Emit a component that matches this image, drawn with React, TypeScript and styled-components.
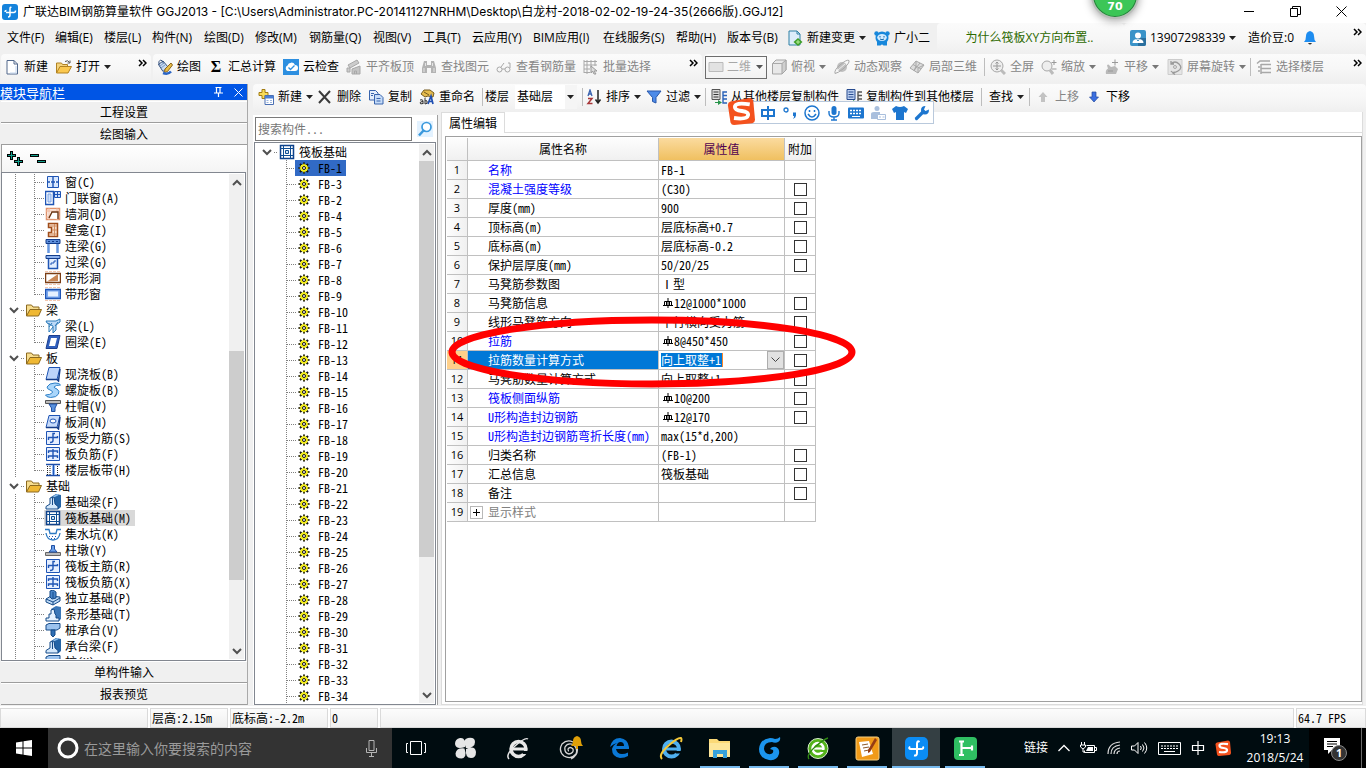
import React from 'react';
import styled, { createGlobalStyle, css } from 'styled-components';

const ui = `"Open Sans", "Noto Sans CJK SC", sans-serif`;
const song = `"Noto Sans Mono CJK SC", "Noto Sans CJK SC", monospace`;

const GlobalStyle = createGlobalStyle`
  * { box-sizing: border-box; }
  html, body { margin: 0; padding: 0; }
  body { font: 12px/16px ${ui}; color: #000; background: #f0f0f0; overflow: hidden; }
  button, input, select { font: inherit; color: inherit; margin: 0; padding: 0; border: 0; border-radius: 0; background: none; outline: none; }
  a { text-decoration: none; }
  ul { list-style: none; margin: 0; padding: 0; }
  svg { display: block; flex: none; }
`;

/* ---------- icons ---------- */

const B = '#1f55b5';
const G = '#a8a8a8';
const f = (fill: string) => ({ fill, stroke: 'none' });

const icons: Record<string, React.ReactNode> = {
  app: <><rect width="16" height="16" rx="3" {...f('#1583dc')} /><path d="M9.500 3.500Q8 2.500 8 5v6q0 2-2 2M3 8q0-1.500 1.500-1.500M4 8.500h8q1.500 0 1.500-2" stroke="#fff" strokeWidth="1.500" /></>,
  page: <><path d="M3 1.500h7l3.500 3.500v10H3z" fill="#fff" stroke="#53698c" /><path d="M10 1.500V5h3.500" stroke="#53698c" /><path d="M12 7v7H6" stroke="#c4d6ee" /></>,
  open: <><path d="M.5 14V4h5l1 1.500h5V8" fill="#f4d37d" stroke="#b18222" /><path d="M.5 14 4 7.500h11.500L12 14z" fill="#fbc84f" stroke="#b18222" /><path d="M9 2.500q3-2 4.500 1M14 1.500v2.500h-2.500" stroke="#555" /></>,
  draw: <><path d="M1.500 5.500 6 2l5 6-5 4.500z" fill="#c9dbf2" stroke="#36527f" /><path d="M2 6q-1-4 1.500-5Q6 1 6.500 5" stroke="#36527f" /><path d="M3 7l4-3M4 9l4-3" stroke="#7c9cc8" /><path d="M8 10l6-6 1.500 2-5 6.500-3 1z" fill="#e9bd45" stroke="#8a641c" /><path d="M6 14q5 2 8-1.500" stroke="#2b65c5" strokeWidth="2.500" /></>,
  cloud: <><rect width="16" height="16" {...f('#2d8fe0')} /><path d="M4.500 12a3 3 0 0 1 0-5.500 4 4 0 0 1 7.500-.5 3 3 0 0 1 0 6z" {...f('#fff')} /><path d="M5.500 8.500l2 2 4-4" stroke="#2d8fe0" strokeWidth="1.300" /></>,
  align: <><path d="M2 6l9-5 2 3-9 5zM1 9l3 0v4l-3 0z" fill="#ccc" stroke={G} /><path d="M6 15V10l8-3v8zM8.500 15v-3h2v3" fill="#c4c4c4" stroke={G} /></>,
  find: <><path d="M3 2h3v4h4V2h3l2 7v5h-5V9H6v5H1V9z" {...f('#b3b3b3')} /><path d="M3 9v4M13 9v4M4.500 4v3M11.500 4v3" stroke="#e5e5e5" /></>,
  glasses: <><circle cx="3.500" cy="10.500" r="2.500" /><circle cx="11.500" cy="10.500" r="2.500" /><path d="M6 10h3M5 8l3-4M14 9V4h-2" /></>,
  batch: <><path d="M1 1v13M4 1v14M8 1v8M12 1v6M1 2.500h13M1 6h13M1 10h6M1 13.500h6" /><path d="M8 7l6 5h-3l2 3-2 0-1.500-3L8 14z" fill="#ddd" stroke="#999" /></>,
  plane: <path d="M1 3.500h14v9H1z" fill="#e2e2e2" stroke="#bbb" />,
  cube: <><path d="M1.500 4.500 5 1h10v10l-4 4h-9.500z" fill="#e8e8e8" stroke="#a5a5a5" /><path d="M11 4.500 15 1v10l-4 4z" fill="#cfcfcf" stroke="#a5a5a5" /><path d="M1.500 4.500H11" stroke="#aaa" /></>,
  orbit: <><circle cx="8" cy="8" r="5" {...f('#bfbfbf')} /><path d="M1 14.500Q0 11 6 6q7-6 9-4.500Q16 4 9 10q-5 4-8 4.500z" stroke={G} /><path d="M4 11l7-6" stroke="#eee" /></>,
  part3d: <><path d="M1 9 7 2l8 4-6 8z" fill="#ddd" stroke={G} /><path d="M4 5.500l8 4.500M11 4l-6 7.500M7 2v5l-2 5M9 14V9l6-3" stroke={G} /></>,
  full: <><circle cx="7" cy="7" r="6" fill="#eee" stroke={G} /><path d="M7 3v8M3 7h8M5.500 4.500 7 3l1.500 1.500M5.500 9.500 7 11l1.500-1.500" stroke="#999" /><path d="M11 11l4 4" stroke="#bbb" strokeWidth="3" /></>,
  zoom: <><circle cx="6" cy="7" r="5" fill="#eee" stroke={G} /><path d="M9 11l3 4" stroke="#bbb" strokeWidth="3" /><path d="M13 1v5M10.500 3.500h5M11 10h4.500" stroke="#999" /></>,
  pan: <><path d="M2 15q-1-4 2-5.500L3 6.500q1-2 2.500 0L7 8l4-1 3 3-2 5z" {...f('#b9b9b9')} /><path d="M11 .5v6M8 3.500h6M4 12h5" stroke="#999" /></>,
  rotate: <><path d="M1 .5h14v15H1z" fill="#e5e5e5" stroke="#ccc" /><path d="M4 5q4-4 8 0t-1 7-7 0M4 2v3h3M8 13l-2 1 2 1.500" stroke="#999" strokeWidth="1.300" /><circle cx="8" cy="8" r="1.500" stroke={G} /></>,
  floorSel: <path d="M1 4.500 4 2h10M5 5.500h10M5 9.500h10M5 13.500h10M5 5v10M2 8h2M2 12h2" strokeWidth="1.500" />,
  newItem: <><path d="M4 .5h3v3h3v3H7v3H4v-3H1v-3h3z" fill="#f9dc59" stroke="#a37c12" /><path d="M7 6.500h8.500v9H7z" fill="#fff" stroke="#4a6fb3" /><path d="M7 7h8.500v2.500H7z" {...f('#4c7fd4')} /><path d="M8.500 11.500h2M12 11.500h2M8.500 13.500h2M12 13.500h2" stroke="#9ab4dd" /></>,
  del: <path d="M2 2l11 12M13 2 2 14" stroke="#3a3a3a" strokeWidth="2" />,
  copy: <><path d="M1.500 1.500h6l2.500 2.500v7H1.500z" fill="#e4eefc" stroke="#3864ad" /><path d="M6.500 5.500h5.500l3 3V15H6.500z" fill="#c5dbf8" stroke="#3864ad" /><path d="M3 4.500h3M3 6.500h2M8.500 9.500h4M8.500 12h4" stroke="#3864ad" /></>,
  rename: <><path d="M2 5l3-4h6l4 3-1 4-5-1-3 1z" fill="#e5bb4c" stroke="#745a20" /><path d="M5 3l5 3" stroke="#745a20" /><path d="M9 15l3-8 2 8M10 12.500h3.500" stroke="#1f4fb2" strokeWidth="1.700" /><path d="M1 11q3-1 3 1v3M4 12.500q-3 0-3 1.500t3 .5M6 9v6q3 0 2-3-1-1-2 0" stroke="#333" /></>,
  sort: <><path d="M2 7 4 1l2 6M2.500 5h3" stroke="#3861ae" strokeWidth="1.300" /><path d="M2 9.500h4L2 14.500h4.500" stroke="#a73639" strokeWidth="1.500" /><path d="M12 1v12M9.500 10.500 12 14l2.500-3.500" stroke="#222" strokeWidth="1.500" /></>,
  filter: <path d="M1 2h14L10 8.500V14l-3.500-1.500v-4z" fill="#4d8be8" stroke="#2857aa" />,
  copyFrom: <><path d="M1 .5h8v10H1z" fill="#ddd" stroke="#555" /><path d="M2.500 3h5M2.500 5.500h5M2.500 8h5" stroke="#333" /><path d="M16 3h-4v11h4M12 6.500h4M12 10h4" stroke="#2a62b8" strokeWidth="1.400" /><path d="M4 13h3v-2l4 2.500-4 2.500v-2H4z" {...f('#27944a')} /></>,
  copyTo: <><path d="M1 .5h8v10H1z" fill="#bcd0f1" stroke="#274b8f" /><path d="M2.500 3h5M2.500 5.500h5M2.500 8h5" stroke="#274b8f" /><path d="M16 3h-4v11h4M12 6.500h4M12 10h4" stroke="#555" strokeWidth="1.400" /><path d="M4 13h3v-2l4 2.500-4 2.500v-2H4z" {...f('#27944a')} /></>,
  up: <path d="M8 3l4.500 5H10v5H6V8H3.500z" {...f('#c3c3c3')} />,
  down: <path d="M8 13l4.500-5H10V3H6v5H3.500z" fill="#3b6fe0" stroke="#24499c" strokeWidth=".7" />,
  change: <><path d="M2 1h8l3 3v11H2z" fill="#dcedfa" stroke="#2e80a5" /><path d="M10 1v3h3" stroke="#2e80a5" /><path d="M11 8l4.500 4-4.500 4-4.500-4z" {...f('#3f9f2a')} /><path d="M11 10v4M9 12h4" stroke="#b8f09a" /></>,
  robot: <><circle cx="8" cy="8" r="6.500" {...f('#1787db')} /><circle cx="2.500" cy="3.500" r="2.200" {...f('#1787db')} /><circle cx="13.500" cy="3.500" r="2.200" {...f('#1787db')} /><path d="M3 11h10v4.500h-3.500L8 14l-1.500 1.500H3z" {...f('#1787db')} /><ellipse cx="8" cy="7.500" rx="4.800" ry="3.500" {...f('#cfeaff')} /><path d="M6 6v1.500M10 6v1.500M6 9q2 1.500 4 0" stroke="#1265a8" /></>,
  user: <><rect width="16" height="16" rx="2" {...f('#3a93c8')} /><path d="M8 16V8h8v6q0 2-2 2z" {...f('#2a6f9e')} /><circle cx="8" cy="5.500" r="3" {...f('#fff')} /><path d="M2.500 13q0-4 5.500-4t5.500 4z" {...f('#fff')} /><path d="M7 9.500l1 1.500 1-1.500" stroke="#2d87bd" /></>,
  bell: <><path d="M2 12q2-2 2-6 0-4 4-5 4 1 4 5 0 4 2 6z" {...f('#1e8df0')} /><path d="M6 13q2 3 4 0z" {...f('#333')} /></>,
  /* component tree */
  window: <><path d="M2.500 2.500h11v11h-11z" fill="#d8e8ff" stroke={B} /><path d="M8 2v12M2 8h12" stroke={B} strokeWidth="1.400" /><path d="M5 8h1M10 8h1" stroke="#fff" strokeWidth="2" /></>,
  door: <><path d="M.5 1.500h8v13h-8z" fill="#fff" stroke={B} strokeWidth="1.500" /><path d="M3 4h3v8H3z" fill="#cfe0fb" stroke="#7ba3e4" /><path d="M9.500 1.500h6v6h-6zM12.500 1.500v6M9.500 4.500h6" fill="#cfe0fb" stroke={B} /></>,
  hole: <><path d="M1.500 2.500h13v11h-13z" fill="#fff" stroke="#e0926c" strokeWidth="1.500" /><path d="M1 5h14M1 11h14M4 2v12M12 2v12" stroke="#f0b394" /><path d="M4 12 7 6h6v7" fill="#fff" stroke="#6b3513" strokeWidth="1.400" /></>,
  niche: <><path d="M3.500 1.500h9v13h-9v-4h3v-5h-3z" fill="#f8dcc8" stroke="#a04d1b" strokeWidth="1.500" /><path d="M4 4h8M7 8h5M4 12h8M9.500 2v12" stroke="#cf8e62" /></>,
  linkBeam: <><path d="M1 1.500h14v4H1z" fill="#5e8fdb" stroke="#123c8b" /><path d="M3 3.500h2M7 3.500h2M11 3.500h2" stroke="#123c8b" /><path d="M3.500 6v9M12.500 6v9" stroke="#6596e0" strokeWidth="2.500" /></>,
  lintel: <><path d="M1 1.500h14v3H1z" fill="#8db2ee" stroke="#123c8b" /><path d="M3.500 5v9.500h9V5" fill="#e3eeff" stroke={B} strokeWidth="1.500" /><path d="M6 11V9h3V7h2" stroke={B} /></>,
  stripHole: <><path d="M.5 3.500h15v9H.5z" fill="#fff" stroke="#7b3d14" strokeWidth="1.500" /><path d="M2 11.500 13 4v7z" {...f('#c98655')} /><path d="M0 1.500h16M0 14.500h16" stroke="#f4c6ae" strokeDasharray="3 1" /></>,
  stripWindow: <><path d="M.5 3.500h15v9H.5z" fill="#7aa7ee" stroke={B} strokeWidth="1.400" /><path d="M3 5.500h10v5H3z" {...f('#e5f0ff')} /><path d="M0 1.500h16M0 14.500h16" stroke="#f4c6ae" strokeDasharray="3 1" /></>,
  beam: <><path d="M1 3h10l4-2v3l-4 3v5l-3 3V8L2 5z" fill="#bcd9f7" stroke="#2b7ab8" /><path d="M4 9l3-4M4 14l4-5M10 8l3-4M4 5v9" stroke="#2b7ab8" /></>,
  ring: <><path d="M4 1.500h11l-3 13H1z" fill="#2f5fbe" stroke="#1b3e8f" /><path d="M6 4h6l-2 8H4z" {...f('#fff')} /></>,
  slab: <><path d="M4 1.500h11l-3 12H1z" fill="#bdd4f9" stroke={B} /><path d="M1 13.500h11l1.500 1.500L15 3" stroke="#153c89" strokeWidth="1.500" /></>,
  spiral: <path d="M2 5q2-4 8-4 5 0 5.500 2-5 0-6.500 2 0 1 3 2 3 2 1.500 5-2 3.500-8 3.500Q1 15 .5 13q5 0 7-2.500Q8 9 5 8 2 7 2 5z" fill="#a9d6fb" stroke="#2d7fc7" />,
  cap: <><path d="M.5 2.500h15v3H.5z" fill="#bbb" stroke="#555" /><path d="M4 6h8l-2 4v3.500H6.500V10z" fill="#5a92dd" stroke="#1f4ea3" /></>,
  slabHole: <><path d="M4 1.500h11l-3 12H1z" fill="#c7dbfb" stroke={B} /><path d="M1 13.500h11l1.500 1.500L15 3" stroke="#153c89" strokeWidth="1.500" /><ellipse cx="8" cy="7" rx="3" ry="2" fill="#fff" stroke={B} /></>,
  rebarMain: <><path d="M1.500 1.500h13v13h-13z" fill="#e6efff" stroke={B} /><path d="M10 3.500H8v7q0 2-3 2M3.500 10V7.500h9V6" stroke={B} strokeWidth="1.400" /></>,
  rebarNeg: <><path d="M1.500 1.500h13v13h-13z" fill="#e6efff" stroke={B} /><path d="M8 3v10M3.500 7V5h9v2M3.500 12v-2h9v2" stroke={B} strokeWidth="1.400" /></>,
  strip: <><path d="M1 2.500h14M1 13.500h14" stroke="#1c4da8" strokeWidth="1.500" /><path d="M7 3h3v10H7z" {...f('#8db5f1')} /><path d="M8.500 3v10" stroke={B} /><path d="M2.500 4v9M5 4v9M12.500 4v9" stroke="#222" strokeDasharray="1 1" /></>,
  fbeam: <><path d="M6 3l5-3 5 1v12l-3 2.500z" {...f('#2464a6')} /><path d="M8 3l5-2.500" stroke="#8fbfec" strokeWidth="1.500" /><path d="M1 15v-2.500l4-2.500V4l4-1 1 7 3 2.500V15z" fill="#d4e8fb" stroke="#154a88" /><path d="M7.500 4v7" stroke="#154a88" /></>,
  raft: <><path d="M1.500 1.500h13v13h-13z" fill="#fff" stroke="#0f418a" strokeWidth="1.500" /><path d="M4.500 1v14M11.500 1v14M1 4.500h14M1 11.500h14" stroke="#0f4d92" /><path d="M6.500 6.500h3v3h-3z" fill="#d1e5f8" stroke="#0f4d92" /></>,
  pit: <><path d="M0 3.500h4l1 4h6l1-4h4M1 7q1 7 7 7t7-7" stroke="#2d7ac3" strokeWidth="1.300" /><path d="M4 10.500h8M6 12.500h5" stroke={B} strokeDasharray="1 2" /></>,
  pier: <><path d="M.5 10.500h15v3H.5z" fill="#bbb" stroke="#666" /><path d="M4 10 6.500 7V3.500h3V7L12 10z" fill="#6aa0e8" stroke="#1f4ea3" /></>,
  isolated: <><path d="M1 9l5-3 9 1v4l-7 4-7-3z" fill="#bdd9f5" stroke="#154a88" /><path d="M5 1l3-1 3 2v6l-4 1-2-2z" fill="#4985c9" stroke="#154a88" /><path d="M1 9l7 3 7-4M8 12v3M8 2v6" stroke="#154a88" /></>,
  stripF: <><path d="M6 3l5-3 5 1v12l-3 2.500z" {...f('#3b77b8')} /><path d="M1 15v-3h3V8h2V4l3-1 1 5 1 1v3h3v3z" fill="#e5f2ff" stroke="#154a88" /></>,
  pileCap: <><path d="M1 3l3-1.500h11V6l-3 2H1z" fill="#9cc3ee" stroke="#154a88" /><path d="M6 8h4v5l-2 2-2-2z" fill="#2f6fb4" stroke="#154a88" /></>,
  folder: <><path d="M.5 14V3h5l1.500 2h6v3" fill="#f7dd8f" stroke="#8c6a20" /><path d="M.5 14 4 7.500h11.500L12.500 14z" fill="#efb834" stroke="#8c6a20" /></>,
  gear: <><path d="M8 2.500v11M2.500 8h11M4 4l8 8M12 4l-8 8" stroke="#111" strokeWidth="2" /><circle cx="8" cy="8" r="3.800" {...f('#f4ee18')} /><path d="M8 3.500v9M3.500 8h9M5 5l6 6M11 5l-6 6" stroke="#f4ee18" /><circle cx="8" cy="8" r="1.500" fill="#fff" stroke="#111" /></>,
  search: <><path d="M0 0h16v16H0z" {...f('#e3f2ff')} /><circle cx="9.500" cy="6" r="4.500" fill="#fff" stroke="#3a99dd" strokeWidth="1.700" /><path d="M6.500 9.500 2 14.500" stroke="#3a99dd" strokeWidth="2.500" /></>,
  /* input method */
  zhong: <path d="M2 5h12v6H2zM8 1v14" stroke="#1d76cf" strokeWidth="2" />,
  punct: <><circle cx="4" cy="5" r="2" stroke="#1d76cf" strokeWidth="1.300" /><path d="M11 7.500h3v3q0 2-3 3.500 1.200-1.500 1-3h-1z" {...f('#1d76cf')} /></>,
  smile: <><circle cx="8" cy="8" r="7" stroke="#1d76cf" strokeWidth="1.500" /><path d="M5.500 5v2M10.500 5v2M4 9q4 6 8 0" stroke="#1d76cf" strokeWidth="1.500" /></>,
  mic: <><rect x="5.500" y="1" width="5" height="9" rx="2.500" {...f('#1d76cf')} /><path d="M3 6v2q0 4 5 4t5-4V6M8 12v3M5 15h6" stroke="#1d76cf" strokeWidth="1.400" /></>,
  keys: <><rect y="2.500" width="16" height="11" rx="1" {...f('#1d76cf')} /><path d="M2 5.500h12M2 8.500h12" stroke="#fff" strokeDasharray="2 1" strokeWidth="1.500" /><path d="M4 11.500h8" stroke="#fff" /></>,
  person: <><circle cx="7" cy="3.500" r="2.500" {...f('#a9bfdd')} /><path d="M1 14V9q0-2 3-2h6v7z" {...f('#a9bfdd')} /><path d="M7.500 9.500h8v5h-8z" fill="#fff" stroke="#a9bfdd" /><path d="M9 12h2M12.500 12h2" stroke="#a9bfdd" /></>,
  shirt: <path d="M0 4l4-3q4 2 8 0l4 3-2 4-2-1v8H4V7L2 8z" {...f('#1d76cf')} />,
  wrench: <><path d="M2.500 13.500 9 7" stroke="#1d76cf" strokeWidth="3.200" strokeLinecap="round" /><path d="M15 4.500 11.500 6 10 4.500 11.500 1Q7 1 7 5q0 4.500 4 4.500T15 4.500z" {...f('#1d76cf')} /></>,
  sogou: <><path d="M2 2.500 13 .5q1.500 0 2 1.500l1 11q0 1.500-1.500 2L4 16q-1.500 0-2-1.500L.5 4.500Q.5 3 2 2.500z" {...f('#f4521e')} /><path d="M13 4.200Q4.500 2.800 4.500 5.700q0 1.800 4 2.300 4 .5 3.500 2.500-.5 2.500-8 1.500" stroke="#fff" strokeWidth="2.200" /></>,
};

const Icon = ({ name, size = 16 }: { name: string; size?: number }) => (
  <svg width={size} height={size} viewBox="0 0 16 16" fill="none" stroke={G} aria-hidden="true">{icons[name]}</svg>
);

const Caret = ({ color = '#222' }: { color?: string }) => (
  <svg width="7" height="4" viewBox="0 0 7 4" aria-hidden="true"><path d="M0 0h7L3.500 4z" fill={color} /></svg>
);

const Chevron = ({ up }: { up?: boolean }) => (
  <svg width="10" height="8" viewBox="0 0 10 8" fill="none" stroke="#505050" strokeWidth="2" aria-hidden="true">
    <path d={up ? 'M1 6l4-4 4 4' : 'M1 2l4 4 4-4'} />
  </svg>
);

/* ---------- window frame ---------- */

const Window = styled.div`
  position: relative;
  display: flex;
  flex-direction: column;
  height: 100vh;
  overflow: hidden;
`;
const TitleBar = styled.header`
  display: flex;
  align-items: center;
  flex: 0 0 23px;
  gap: 5px;
  padding-left: 2px;
  background: #fff;
  white-space: nowrap;
`;
const Title = styled.h1`
  flex: 1;
  margin: 0;
  font: 12px/22px Inter, "Noto Sans CJK SC", sans-serif;
`;
const WindowButtons = styled.div`
  display: flex;
  gap: 34px;
  padding-right: 19px;
`;
const WinButton = styled.button`
  width: 12px;
  height: 20px;
  display: grid;
  place-items: center;
`;
const Ball = styled.div`
  position: absolute;
  left: 1091px;
  top: -29px;
  width: 48px;
  height: 48px;
  border-radius: 50%;
  border: 2px solid #b9bdb9;
  background: #3cc657;
  box-shadow: inset 0 0 0 1px #2a7d3d, 0 2px 8px rgba(0, 0, 0, 0.35);
  color: #fff;
  font: bold 11px/16px "DejaVu Sans", sans-serif;
  text-align: center;
  padding-top: 26px;
`;

/* ---------- menus and tool bars ---------- */

const MenuRow = styled.div`
  display: flex;
  flex: 0 0 31px;
`;
const Menu = styled.nav`
  display: flex;
  align-items: center;
  flex: 0 0 937px;
  padding: 0 0 1px 7px;
`;
const Strip = styled.div<{ $w?: number; $pad?: number; $bottom?: number }>`
  display: flex;
  align-items: center;
  ${p => (p.$w ? `flex: 0 0 ${p.$w}px;` : 'flex: 1;')}
  min-width: 0;
  padding-left: ${p => p.$pad ?? 4}px;
  padding-bottom: ${p => p.$bottom ?? 3}px;
  border-radius: 4px;
  background: linear-gradient(#fbfbfb, #f7f7f7 50%, #efefef);
`;
const ToolRow = styled.div`
  display: flex;
  flex: 0 0 30px;
  gap: 2px;
  padding: 0 0 1px 1px;
`;
const Item = styled.button<{ $w?: number }>`
  display: flex;
  align-items: center;
  flex: 0 0 ${p => (p.$w ? `${p.$w}px` : 'auto')};
  gap: 4px;
  height: 24px;
  white-space: nowrap;
  &:disabled { color: #868686; }
`;
const Sigma = styled.span`
  width: 16px;
  text-align: center;
  font: bold 16px/16px "Liberation Serif", serif;
`;
const Sep = styled.span<{ $w: number }>`
  flex: 0 0 ${p => p.$w}px;
  height: 18px;
  border-left: 1px solid #bdbdbd;
`;
const MoreButton = styled.button`
  margin-left: auto;
  margin-right: 4px;
  align-self: flex-start;
  padding-top: 5px;
`;
const News = styled.a`
  flex: 1;
  padding-right: 6px;
  text-align: center;
  color: #2d6a00;
`;
const ViewBox = styled.label`
  display: flex;
  align-items: center;
  flex: 0 0 62px;
  gap: 3px;
  height: 23px;
  padding: 0 3px 0 2px;
  margin-right: 4px;
  border: 1px solid #6d6d6d;
  color: #868686;
`;
const PlainSelect = styled.select`
  appearance: none;
  flex: 1;
  min-width: 0;
`;
const FloorBox = styled.label`
  display: flex;
  align-items: center;
  flex: 0 0 62px;
  margin-right: 5px;
  height: 24px;
  padding-left: 2px;
  padding-right: 3px;
  background: linear-gradient(90deg, #fff 50px, #f5f5f5 50px);
`;
const Text = styled.label<{ $w: number }>`
  flex: 0 0 ${p => p.$w}px;
`;

type Tool = { t: string; i?: string; w?: number; off?: boolean; drop?: boolean };

const Tools = ({ items }: { items: Tool[] }) => (
  <>
    {items.map(x =>
      x.t === '|' ? <Sep key={`sep${x.w}${x.i ?? ''}`} $w={x.w ?? 6} /> : (
        <Item key={x.t} $w={x.w} disabled={x.off}>
          {x.i === 'sigma' ? <Sigma>Σ</Sigma> : x.i && <Icon name={x.i} />}
          {x.t}
          {x.drop && <Caret color={x.off ? '#777' : '#222'} />}
        </Item>
      ))}
  </>
);

const More = () => (
  <MoreButton aria-label="更多">
    <svg width="9" height="8" viewBox="0 0 9 8" fill="none" stroke="#000" strokeWidth="1.500"><path d="M1 1l3 3-3 3M5 1l3 3-3 3" /></svg>
  </MoreButton>
);

const menu: [string, number][] = [
  ['文件(F)', 48], ['编辑(E)', 49], ['楼层(L)', 48], ['构件(N)', 52], ['绘图(D)', 51], ['修改(M)', 54], ['钢筋量(Q)', 64],
  ['视图(V)', 50], ['工具(T)', 49], ['云应用(Y)', 61], ['BIM应用(I)', 70], ['在线服务(S)', 73], ['帮助(H)', 51], ['版本号(B)', 60],
];
const drawTools: Tool[] = [
  { t: '绘图', i: 'draw', w: 51 }, { t: '汇总计算', i: 'sigma', w: 75 }, { t: '云检查', i: 'cloud', w: 63 },
  { t: '平齐板顶', i: 'align', w: 75, off: true }, { t: '查找图元', i: 'find', w: 75, off: true },
  { t: '查看钢筋量', i: 'glasses', w: 87, off: true }, { t: '批量选择', i: 'batch', w: 75, off: true },
];
const viewTools: Tool[] = [
  { t: '俯视', i: 'cube', w: 63, off: true, drop: true }, { t: '动态观察', i: 'orbit', w: 75, off: true },
  { t: '局部三维', i: 'part3d', w: 75, off: true }, { t: '|', w: 6 }, { t: '全屏', i: 'full', w: 51, off: true },
  { t: '缩放', i: 'zoom', w: 63, off: true, drop: true }, { t: '平移', i: 'pan', w: 63, off: true, drop: true },
  { t: '屏幕旋转', i: 'rotate', w: 83, off: true, drop: true }, { t: '|', w: 6, i: 'b' }, { t: '选择楼层', i: 'floorSel', w: 75, off: true },
];

/* ---------- left navigation ---------- */

const Main = styled.main`
  display: flex;
  flex: 1;
  min-height: 0;
  padding-bottom: 1px;
`;
const Nav = styled.aside`
  display: flex;
  flex-direction: column;
  flex: 0 0 248px;
  font-family: ${song};
  border-right: 1px solid #a9a9a9;
`;
const NavHead = styled.div`
  display: flex;
  align-items: center;
  flex: 0 0 16px;
  gap: 11px;
  margin-bottom: 1px;
  padding-right: 4px;
  background: #0055e5;
  color: #fff;
  font-size: 13px;
  line-height: 15px;
  span { flex: 1; }
`;
const NavButton = styled.button`
  flex: 0 0 22px;
  margin-left: 1px;
  background: #f0f0f0;
  border-top: 1px solid #fff;
  border-bottom: 1px solid #9d9d9d;
  text-align: center;
`;
const NavTools = styled.div`
  display: flex;
  align-items: center;
  gap: 6px;
  flex: 0 0 27px;
  margin: 0 0 0 1px;
  padding-left: 5px;
  border-left: 1px solid #9d9d9d;
  background: linear-gradient(#fff, #f4f4f4);
`;
const TreeBox = styled.div`
  display: flex;
  flex: 1;
  min-height: 0;
  margin: 0 1px 0 1px;
  padding: 1px;
  border: 1px solid #828790;
  background: #fff;
`;
const TreeList = styled.ul`
  flex: 1;
  min-width: 0;
  overflow: hidden;
`;
const dots = 'repeating-linear-gradient(180deg, #808080 0 1px, transparent 1px 2px)';
const hdots = 'repeating-linear-gradient(90deg, #808080 0 1px, transparent 1px 2px)';
const TreeRow = styled.li<{ $kind: 'group' | 'leaf' | 'last' | 'root' | 'part' }>`
  display: flex;
  align-items: center;
  height: 16px;
  white-space: nowrap;
  background-repeat: no-repeat;
  ${p => (p.$kind === 'group' || p.$kind === 'root') && css`
    padding-left: 6px;
    gap: 7px;
    background-image: ${hdots};
    background-size: 4px 1px;
    background-position: 18px 8px;
  `}
  ${p => (p.$kind === 'leaf' || p.$kind === 'last') && css`
    padding-left: 41px;
    background-image: ${dots}, ${dots}, ${hdots};
    background-size: 1px 16px, 1px ${p.$kind === 'last' ? 9 : 16}px, 10px 1px;
    background-position: 12px 0, 31px 0, 32px 8px;
  `}
  ${p => p.$kind === 'part' && css`
    padding-left: 39px;
    background-image: ${dots}, ${hdots};
    background-size: 1px 16px, 9px 1px;
    background-position: 30px 0, 31px 8px;
  `}
`;
const Leaf = styled.span<{ $on?: boolean }>`
  display: flex;
  align-items: center;
  gap: 4px;
  height: 16px;
  padding: 0 4px 0 1px;
  line-height: 16px;
  background: ${p => (p.$on ? '#d9d9d9' : 'transparent')};
`;
const Part = styled.span<{ $on?: boolean }>`
  display: flex;
  align-items: center;
  gap: 6px;
  height: 16px;
  padding: 0 4px 0 1px;
  background: ${p => (p.$on ? '#316ac5' : 'transparent')};
`;
const GroupName = styled.span`
  display: flex;
  align-items: center;
  gap: 4px;
`;
const Twisty = styled.button`
  width: 10px;
  height: 12px;
  display: grid;
  place-items: center;
`;
const Track = styled.div`
  display: flex;
  flex-direction: column;
  flex: 0 0 15px;
  background: #f0f0f0;
`;
const TrackButton = styled.button`
  flex: 0 0 17px;
  display: grid;
  place-items: center;
`;
const Space = styled.div<{ $n: number; $thumb?: boolean }>`
  flex: ${p => p.$n} 1 0;
  background: ${p => (p.$thumb ? '#cdcdcd' : 'transparent')};
`;

const ScrollBar = ({ before, thumb, after }: { before: number; thumb: number; after: number }) => (
  <Track>
    <TrackButton aria-label="向上滚动"><Chevron up /></TrackButton>
    <Space $n={before} />
    <Space $n={thumb} $thumb />
    <Space $n={after} />
    <TrackButton aria-label="向下滚动"><Chevron /></TrackButton>
  </Track>
);

type Group = { name?: string; items: [string, string][]; open?: boolean };
const groups: Group[] = [
  { items: [['窗(C)', 'window'], ['门联窗(A)', 'door'], ['墙洞(D)', 'hole'], ['壁龛(I)', 'niche'], ['连梁(G)', 'linkBeam'], ['过梁(G)', 'lintel'], ['带形洞', 'stripHole'], ['带形窗', 'stripWindow']] },
  { name: '梁', items: [['梁(L)', 'beam'], ['圈梁(E)', 'ring']] },
  { name: '板', items: [['现浇板(B)', 'slab'], ['螺旋板(B)', 'spiral'], ['柱帽(V)', 'cap'], ['板洞(N)', 'slabHole'], ['板受力筋(S)', 'rebarMain'], ['板负筋(F)', 'rebarNeg'], ['楼层板带(H)', 'strip']] },
  { name: '基础', open: true, items: [['基础梁(F)', 'fbeam'], ['筏板基础(M)', 'raft'], ['集水坑(K)', 'pit'], ['柱墩(Y)', 'pier'], ['筏板主筋(R)', 'rebarMain'], ['筏板负筋(X)', 'rebarNeg'], ['独立基础(P)', 'isolated'], ['条形基础(T)', 'stripF'], ['桩承台(V)', 'pileCap'], ['承台梁(F)', 'fbeam'], ['桩(U)', 'pileCap']] },
];

/* ---------- work area ---------- */

const Work = styled.section`
  display: flex;
  flex-direction: column;
  flex: 1;
  min-width: 0;
  margin-left: 5px;
`;
const WorkTools = styled.div`
  display: flex;
  flex: 0 0 28px;
`;
const WorkBody = styled.div`
  display: flex;
  flex: 1;
  min-height: 0;
  gap: 3px;
`;
const Parts = styled.div`
  display: flex;
  flex-direction: column;
  flex: 0 0 185px;
  margin-top: 3px;
  background: #fff;
  border-right: 1px solid #a0a0a0;
  font-family: ${song};
`;
const SearchRow = styled.form`
  display: flex;
  align-items: center;
  gap: 5px;
  padding: 2px 1px 1px 2px;
`;
const SearchInput = styled.input`
  flex: 0 0 157px;
  height: 24px;
  padding: 0 2px 2px;
  border: 1px solid #7a7a7a;
  background: #fff;
  &::placeholder { color: #767676; opacity: 1; }
`;
const Editor = styled.div`
  display: flex;
  flex-direction: column;
  flex: 1;
  min-width: 0;
  margin-right: 3px;
  background: #fff;
  border: 1px solid #dcdcdc;
  border-top: 0;
  font-family: ${song};
`;
const TabRow = styled.div`
  display: flex;
  flex: 0 0 21px;
  background: #fff;
`;
const Tab = styled.button`
  flex: 0 0 63px;
  border-top: 1px solid #dcdcdc;
  border-right: 1px solid #dcdcdc;
  background: #fff;
`;
const TabRest = styled.div`
  flex: 1;
  border-bottom: 1px solid #dcdcdc;
`;
const Sheet = styled.div`
  position: relative;
  flex: 1;
  margin: 3px 0 2px 3px;
  padding: 1px;
  border: 1px solid #a0a0a0;
`;
const Grid = styled.table`
  table-layout: fixed;
  width: 369px;
  border-collapse: separate;
  border-spacing: 0;
  td, th {
    height: 19px;
    padding: 0;
    border-right: 1px solid #c0c0c0;
    border-bottom: 1px solid #c0c0c0;
    font-weight: normal;
    line-height: 18px;
    white-space: nowrap;
    overflow: hidden;
    text-align: left;
  }
  thead th {
    height: 23px;
    text-align: center;
    background: linear-gradient(#fdfdfd, #f0f0f0);
  }
  thead th.value { background: linear-gradient(#fbdb9f, #f0c060); color: #500050; }
`;
const RowNo = styled.th<{ $on: boolean }>`
  && { text-align: center; }
  font: 11px/18px "Open Sans", sans-serif;
  background: ${p => (p.$on ? '#ffd08a' : 'linear-gradient(90deg, #fdfdfd, #f0f0f0)')};
`;
const Name = styled.td<{ $tone: 'key' | 'off' | 'on' | 'text' }>`
  color: ${p => ({ key: '#0000ff', off: '#808080', on: '#fff', text: '#000' })[p.$tone]};
  background: ${p => (p.$tone === 'on' ? '#0078d7' : '#fff')};
`;
const NameLine = styled.span`
  display: flex;
  align-items: center;
  padding-left: 2px;
  height: 18px;
`;
const Fold = styled.span`
  flex: 0 0 18px;
`;
const FoldButton = styled.button`
  width: 13px;
  height: 13px;
  display: grid;
  place-items: center;
  border: 1px solid #b8b8b8;
`;
const Value = styled.td`
  && { padding-left: 2px; }
`;
const ValueLine = styled.span`
  display: flex;
  align-items: center;
  height: 18px;
  gap: 1px;
`;
const Combo = styled.span`
  display: flex;
  align-items: center;
  justify-content: space-between;
  height: 18px;
`;
const ComboInput = styled.input`
  width: 62px;
  height: 14px;
  background: #0078d7;
  border-right: 1px solid #ff8728;
  color: #fff;
`;
const ComboButton = styled.button`
  width: 17px;
  height: 18px;
  display: grid;
  place-items: center;
  border: 1px solid #adadad;
  background: #e1e1e1;
`;
const Tick = styled.input`
  appearance: none;
  display: block;
  width: 13px;
  height: 13px;
  margin: 1px 0 0 9px;
  border: 1px solid #333;
  background: #fff;
`;
const Ring = styled.svg`
  position: absolute;
  left: 2px;
  top: 178px;
`;

/* name, value, tick box, colour of the name */
type Prop = [string, string, boolean, ('key' | 'off')?];
const props: Prop[] = [
  ['名称', 'FB-1', false, 'key'], ['混凝土强度等级', '(C30)', true, 'key'], ['厚度(mm)', '900', true],
  ['顶标高(m)', '层底标高+0.7', true], ['底标高(m)', '层底标高-0.2', true], ['保护层厚度(mm)', '50/20/25', true],
  ['马凳筋参数图', 'Ⅰ型', false], ['马凳筋信息', '#12@1000*1000', true], ['线形马凳筋方向', '平行横向受力筋', true],
  ['拉筋', '#8@450*450', true, 'key'], ['拉筋数量计算方式', '向上取整+1', true], ['马凳筋数量计算方式', '向上取整+1', true],
  ['筏板侧面纵筋', '#10@200', true, 'key'], ['U形构造封边钢筋', '#12@170', true, 'key'],
  ['U形构造封边钢筋弯折长度(mm)', 'max(15*d,200)', false, 'key'], ['归类名称', '(FB-1)', true],
  ['汇总信息', '筏板基础', true], ['备注', '', true], ['显示样式', '', false, 'off'],
];
const activeRow = 10;

const RebarMark = () => (
  <svg width="12" height="12" viewBox="0 0 12 12" fill="none" stroke="#000" role="img" aria-label="三级钢">
    <path d="M3.500 4.500h7v4h-7zM5.500 4v5M8.500 4v5M7 1v10M2 8.500h10" />
  </svg>
);

/* ---------- input method bar ---------- */

const Ime = styled.div`
  position: absolute;
  left: 727px;
  top: 97px;
  display: flex;
  align-items: center;
`;
const ImeBody = styled.div`
  display: flex;
  align-items: center;
  gap: 6px;
  height: 23px;
  margin: 3px 0 0 -10px;
  padding: 0 3px 0 14px;
  border: 1px solid #b9c9dc;
  background: #fff;
`;
const ImeLogo = styled.span`
  position: relative;
  z-index: 1;
`;
const IconButton = styled.button`
  display: grid;
  place-items: center;
`;

/* ---------- status bar ---------- */

const Status = styled.footer`
  display: flex;
  flex: 0 0 22px;
  gap: 2px;
  background: #fff;
  font-family: ${song};
`;
const Cell = styled.div<{ $w?: number }>`
  ${p => (p.$w ? `flex: 0 0 ${p.$w}px;` : 'flex: 1;')}
  margin-top: 2px;
  padding-left: 1px;
  border: 1px solid #dadada;
  background: linear-gradient(#fcfcfc, #f0f0f0);
  line-height: 18px;
  white-space: nowrap;
`;

/* ---------- task bar ---------- */

const TaskBar = styled.div`
  display: flex;
  flex: 0 0 40px;
  background: #000c10;
  color: #fff;
`;
const Start = styled.button`
  flex: 0 0 48px;
  display: grid;
  place-items: center;
  background: #000;
`;
const TaskSearch = styled.label`
  display: flex;
  align-items: center;
  flex: 0 0 344px;
  gap: 5px;
  padding: 0 14px 0 9px;
  background: #333;
`;
const TaskInput = styled.input`
  flex: 1;
  min-width: 0;
  height: 24px;
  font-size: 14px;
  &::placeholder { color: #9a9a9a; opacity: 1; }
`;
const Apps = styled.div`
  display: flex;
  flex: 1;
  gap: 1px;
`;
const AppButton = styled.button<{ $w?: number; $run?: boolean; $on?: boolean }>`
  flex: 0 0 ${p => p.$w ?? 48}px;
  display: grid;
  place-items: center;
  background: ${p => (p.$on ? '#343f43' : 'transparent')};
  background-image: ${p => (p.$run ? 'linear-gradient(#76b9ed, #76b9ed)' : 'none')};
  background-repeat: no-repeat;
  background-position: center bottom;
  background-size: ${p => (p.$on ? '48px' : '40px')} 2px;
`;
const Tray = styled.div`
  display: flex;
  align-items: center;
  gap: 10px;
`;
const Clock = styled.div`
  width: 68px;
  text-align: center;
  line-height: 19px;
`;
const Notice = styled.button`
  display: grid;
  place-items: center;
  width: 52px;
  height: 40px;
  margin-left: -10px;
  background: #000;
`;
const ShowDesktop = styled.button`
  width: 5px;
  height: 40px;
  margin-left: -10px;
  border-left: 1px solid #6a6a6a;
  background: #000;
`;

const apps: { label: string; w?: number; run?: boolean; on?: boolean; art: React.ReactNode }[] = [
  { label: '任务视图', w: 48, art: <path d="M6.500 5.500h11v13h-11zM4 7.500H2.500v9H4M20 7.500h1.500v9H20" stroke="#fff" /> },
  { label: '风车', w: 49, art: <g fill="#e6e6e6"><path d="M12 11q-9 3-10-3 0-5 5-6 6-1 5 9zM13 12q-4-9 2-10 7-1 7 4 0 6-9 6zM11.500 12.500q3 9-3 10-6 0-6-5 1-6 9-5zM13 13q9-4 10 3 0 6-5 6-6 0-5-9z" /></g> },
  { label: '浏览器', w: 54, art: <><circle cx="12.500" cy="13" r="7.500" stroke="#e8e8e8" strokeWidth="3.500" /><path d="M6 13h14" stroke="#e8e8e8" strokeWidth="3" /><path d="M15 15h8v3h-6z" fill="#000c10" /><path d="M3 23q-4-4 6-13T22 3" stroke="#e8e8e8" strokeWidth="1.500" /></> },
  { label: '助手', w: 48, art: <><path d="M15 6q-6-3-11 2-4 7 2 12 7 4 12-2 2-5-2-9-6-3-9 2-1 6 4 7 5-1 4-5-3-3-5 0 0 2 1 2M19 11q2 8-6 12" stroke="#d6d6d6" strokeWidth="1.300" /><path d="M13 10q2-2 2-5 0-4 4-5 4 1 4 5 0 3 2 5zM18 10h2v3h-2z" fill="#dfa008" /></> },
  { label: 'Edge', w: 51, art: <path d="M2 11Q4 2 12 2q8 1 9 9v2H8q1 5 6 5 3 0 6-1.500V20q-3 2-8 2-8-1-8-9 1-4 5-6-4 1-7 4zM8.500 10H16q0-4-3.500-4-3 0-4 4z" fill="#0a78d6" /> },
  { label: 'Internet Explorer', w: 48, art: <><circle cx="12.500" cy="13" r="7.500" stroke="#4fb0f0" strokeWidth="4" /><path d="M6 13h15" stroke="#4fb0f0" strokeWidth="3" /><path d="M15 15h8v2.500h-6z" fill="#000c10" /><path d="M3 23q-4-4 6-13T22 2q1 1 0 4" stroke="#f5c93a" strokeWidth="2" /></> },
  { label: '资源管理器', run: true, art: <><path d="M1 3h8l2 2h11v16H1z" fill="#fbd977" /><path d="M1 7h21v14H1z" fill="#fde69a" /><path d="M5 22v-8h14v8h-4v-4H9v4z" fill="#36a2dd" /></> },
  { label: '广联达', run: true, art: <path d="M23 1q1 4-3 5.500-3 .5-5-.5-8 0-8 7 1 6 7 5 3-1 2-4l-3-1q2-3 6-2 4 2 3 7-2 7-10 6-10-2-10-11Q3 3 13 2q3 0 5 1 3 0 5-2z" fill="#1b95ee" /> },
  { label: '安全浏览器', run: true, art: <><circle cx="12" cy="12.500" r="10" fill="#54b31b" stroke="#d9efd0" /><circle cx="12" cy="12.500" r="5.500" stroke="#fff" strokeWidth="2.500" /><path d="M7 12.500h11" stroke="#fff" strokeWidth="2.200" /><path d="M14 14h6v2h-5z" fill="#54b31b" /><path d="M3 23q-3-4 6-12T22 2" stroke="#2f8a12" strokeWidth="1.300" /></> },
  { label: '写字板', run: true, art: <><rect x="1" y="1" width="23" height="23" rx="2" fill="#f09a18" stroke="#f6cf81" /><path d="M4 6l10-1 4 13-11 3z" fill="#fff" /><path d="M7 9l6-1M8 12l6-1M9 15l5-1" stroke="#8c5a2a" /><path d="M20 2l2 2-7 12-2 1 0-3z" fill="#963c14" /></> },
  { label: '广联达钢筋算量', run: true, on: true, art: <><rect x="1" y="1" width="23" height="23" rx="5" fill="#0b8cf4" /><path d="M15.500 6Q13 4 13 8v9q0 3-3 2.500M6 10.500q-2 2.500 1 2.500h10q3 0 2-2.500" stroke="#fff" strokeWidth="2" /></> },
  { label: '广联达计价', run: true, art: <><rect x="1" y="1" width="23" height="23" rx="4" fill="#2fbf62" /><path d="M8.500 5v14M6 5.500h5M6 19h5M8 12h11M19 9.500v5" stroke="#fff" strokeWidth="2.200" /></> },
];

export default function App() {
  return (
    <Window>
      <GlobalStyle />
      <TitleBar>
        <Icon name="app" />
        <Title>广联达BIM钢筋算量软件 GGJ2013 - [C:\Users\Administrator.PC-20141127NRHM\Desktop\白龙村-2018-02-02-19-24-35(2666版).GGJ12]</Title>
        <WindowButtons>
          <WinButton aria-label="最小化"><svg width="11" height="11" stroke="#000"><path d="M0 5.500h10" /></svg></WinButton>
          <WinButton aria-label="还原"><svg width="11" height="11" stroke="#000" fill="none"><path d="M.5 2.500h7v8h-7zM2.500 2.500v-2h8v8h-3" /></svg></WinButton>
          <WinButton aria-label="关闭"><svg width="11" height="11" stroke="#000"><path d="M.5.5l10 10M10.500.5l-10 10" /></svg></WinButton>
        </WindowButtons>
      </TitleBar>
      <Ball>70</Ball>

      <MenuRow>
        <Menu>
          {menu.map(([t, w]) => <Item key={t} $w={w}>{t}</Item>)}
          <Item $w={87}><Icon name="change" />新建变更<Caret /></Item>
          <Item><Icon name="robot" />广小二</Item>
        </Menu>
        <Strip $w={187} $bottom={1}><News href="#">为什么筏板XY方向布置..</News></Strip>
        <Strip $pad={6} $bottom={1}>
          <Item $w={118}><Icon name="user" />13907298339<Caret /></Item>
          <Item $w={54}>造价豆:0</Item>
          <IconButton aria-label="消息"><Icon name="bell" /></IconButton>
          <More />
        </Strip>
      </MenuRow>

      <ToolRow>
        <Strip $w={150} $pad={3}>
          <Tools items={[{ t: '新建', i: 'page', w: 52 }, { t: '打开', i: 'open', drop: true }]} />
          <More />
        </Strip>
        <Strip $w={549}><Tools items={drawTools} /><More /></Strip>
        <Strip $pad={1}>
          <ViewBox>
            <Icon name="plane" />
            <PlainSelect aria-label="视图模式" disabled><option>二维</option></PlainSelect>
            <Caret color="#555" />
          </ViewBox>
          <Tools items={viewTools} />
          <More />
        </Strip>
      </ToolRow>

      <Main>
        <Nav>
          <NavHead>
            <span>模块导航栏</span>
            <IconButton aria-label="固定"><svg width="9" height="10" fill="none" stroke="#fff"><path d="M2.500 1v5M6 1v5M1.500.5h6M0 6h9M4.500 6v4" strokeWidth="1.200" /></svg></IconButton>
            <IconButton aria-label="关闭导航"><svg width="9" height="9" stroke="#fff"><path d="M.5.5l8 8M8.500.5l-8 8" /></svg></IconButton>
          </NavHead>
          <NavButton>工程设置</NavButton>
          <NavButton>绘图输入</NavButton>
          <NavTools>
            <IconButton aria-label="全部展开"><svg width="17" height="16" fill="none"><path d="M4.500 0v9M0 4.500h9M11.500 6v9M7 10.500h9" stroke="#000" strokeWidth="3" /><path d="M4.500 1v7M1 4.500h7M11.500 7v7M8 10.500h7" stroke="#12a08d" /></svg></IconButton>
            <IconButton aria-label="全部折叠"><svg width="17" height="16" fill="none"><path d="M0 4.500h9M7 10.500h9" stroke="#000" strokeWidth="3" /><path d="M1 4.500h7M8 10.500h7" stroke="#12a08d" /></svg></IconButton>
          </NavTools>
          <TreeBox>
            <TreeList>
              {groups.map((g, gi) => (
                <React.Fragment key={gi}>
                  {g.name && (
                    <TreeRow $kind="group">
                      <Twisty aria-label="折叠"><Chevron /></Twisty>
                      <GroupName><Icon name="folder" />{g.name}</GroupName>
                    </TreeRow>
                  )}
                  {g.items.map(([t, i], n) => (
                    <TreeRow key={t} $kind={!g.open && n === g.items.length - 1 ? 'last' : 'leaf'}>
                      <Leaf $on={i === 'raft'}><Icon name={i} />{t}</Leaf>
                    </TreeRow>
                  ))}
                </React.Fragment>
              ))}
            </TreeList>
            <ScrollBar before={160} thumb={229} after={62} />
          </TreeBox>
          <NavButton>单构件输入</NavButton>
          <NavButton>报表预览</NavButton>
        </Nav>

        <Work>
          <WorkTools>
            <Strip $pad={5}>
              <Tools items={[
                { t: '新建', i: 'newItem', w: 59, drop: true }, { t: '删除', i: 'del', w: 51 },
                { t: '复制', i: 'copy', w: 51 }, { t: '重命名', i: 'rename', w: 63 }, { t: '|', w: 3 },
              ]} />
              <Text $w={30} htmlFor="floor">楼层</Text>
              <FloorBox><PlainSelect id="floor"><option>基础层</option></PlainSelect><Caret /></FloorBox>
              <Tools items={[
                { t: '|', w: 4 }, { t: '排序', i: 'sort', w: 60, drop: true }, { t: '过滤', i: 'filter', w: 59, drop: true }, { t: '|', w: 6 },
                { t: '从其他楼层复制构件', i: 'copyFrom', w: 135 }, { t: '复制构件到其他楼层', i: 'copyTo', w: 135 }, { t: '|', w: 8 },
                { t: '查找', w: 40, drop: true }, { t: '|', w: 6, i: 'b' }, { t: '上移', i: 'up', w: 51, off: true }, { t: '下移', i: 'down', w: 51 },
              ]} />
            </Strip>
          </WorkTools>
          <WorkBody>
            <Parts>
              <SearchRow>
                <SearchInput placeholder="搜索构件..." aria-label="搜索构件" />
                <IconButton type="button" aria-label="搜索"><Icon name="search" /></IconButton>
              </SearchRow>
              <TreeBox>
                <TreeList>
                  <TreeRow $kind="root">
                    <Twisty aria-label="折叠"><Chevron /></Twisty>
                    <GroupName><Icon name="raft" />筏板基础</GroupName>
                  </TreeRow>
                  {Array.from({ length: 34 }, (_, n) => (n === 1 ? 3 : n === 2 ? 2 : n + 1)).map(n => (
                    <TreeRow key={n} $kind="part"><Part $on={n === 1}><Icon name="gear" />FB-{n}</Part></TreeRow>
                  ))}
                </TreeList>
                <ScrollBar before={0} thumb={397} after={129} />
              </TreeBox>
            </Parts>

            <Editor>
              <TabRow><Tab role="tab" aria-selected="true">属性编辑</Tab><TabRest /></TabRow>
              <Sheet>
                <Grid>
                  <colgroup><col width="21" /><col width="191" /><col width="126" /><col width="31" /></colgroup>
                  <thead><tr><th /><th>属性名称</th><th className="value">属性值</th><th>附加</th></tr></thead>
                  <tbody>
                    {props.map(([name, value, tick, tone], n) => (
                      <tr key={name}>
                        <RowNo $on={n === activeRow}>{n + 1}</RowNo>
                        <Name $tone={n === activeRow ? 'on' : tone ?? 'text'}>
                          <NameLine>
                            <Fold>{tone === 'off' && <FoldButton aria-label="展开"><svg width="9" height="9" stroke="#000"><path d="M4.500 1v7M1 4.500h7" /></svg></FoldButton>}</Fold>
                            {name}
                          </NameLine>
                        </Name>
                        <Value>
                          {n === activeRow ? (
                            <Combo>
                              <ComboInput defaultValue={value} aria-label={name} />
                              <ComboButton aria-label="选择"><svg width="9" height="6" fill="none" stroke="#444"><path d="M.5.5l4 4 4-4" /></svg></ComboButton>
                            </Combo>
                          ) : (
                            <ValueLine>{value.startsWith('#') ? <><RebarMark />{value.slice(1)}</> : value}</ValueLine>
                          )}
                        </Value>
                        <td>{tick && <Tick type="checkbox" aria-label={`附加 ${name}`} />}</td>
                      </tr>
                    ))}
                  </tbody>
                </Grid>
                <Ring width="408" height="74" viewBox="0 0 408 74" fill="none" stroke="#f00" strokeWidth="7" aria-hidden="true">
                  <ellipse cx="204" cy="37" rx="200" ry="32" />
                </Ring>
              </Sheet>
            </Editor>
          </WorkBody>
        </Work>
      </Main>

      <Status>
        <Cell $w={148} />
        <Cell $w={78}>层高:2.15m</Cell>
        <Cell $w={98}>底标高:-2.2m</Cell>
        <Cell $w={48}>0</Cell>
        <Cell />
        <Cell $w={70}>64.7 FPS</Cell>
      </Status>

      <TaskBar>
        <Start aria-label="开始"><svg width="16" height="16" fill="#fff"><path d="M0 2.500 6.500 1.500v6H0zM7.500 1.300 16 0v7.500H7.500zM0 8.500h6.500v6L0 13.500zM7.500 8.500H16V16l-8.500-1.300z" /></svg></Start>
        <TaskSearch>
          <svg width="22" height="22" fill="none" stroke="#fff" strokeWidth="3"><circle cx="11" cy="11" r="9" /></svg>
          <TaskInput placeholder="在这里输入你要搜索的内容" aria-label="搜索" />
          <svg width="13" height="17" fill="none" stroke="#b5b5b5"><path d="M4 .5h5v10H4zM1.500 8v4.500h10V8M6.500 12.500v3.500M4 16.500h5" /></svg>
        </TaskSearch>
        <Apps>
          {apps.map(a => (
            <AppButton key={a.label} $w={a.w} $run={a.run} $on={a.on} aria-label={a.label}>
              <svg width="25" height="25" viewBox="0 0 25 25" fill="none">{a.art}</svg>
            </AppButton>
          ))}
        </Apps>
        <Tray>
          <span>链接</span>
          <svg width="12" height="8" fill="none" stroke="#fff" strokeWidth="1.300"><path d="M.5 7 6 1.500 11.500 7" /></svg>
          <svg width="17" height="12" fill="none" stroke="#fff"><path d="M6.500 3.500h8v7H4.500v-2M15 5.500h1.500v3H15M1.500 0v3M4.500 0v3M.5 3h5v2L3 7 .5 5zM3 7v3h2" /><path d="M8 5h5v4H6z" fill="#fff" stroke="none" /></svg>
          <svg width="14" height="14" fill="none" stroke="#ddd" strokeWidth="1.200"><path d="M1 13Q1 2 13 1M4 13q0-8 9-9M7 13q0-5 6-6M10 13q0-3 3-3" /></svg>
          <svg width="17" height="14" fill="none" stroke="#fff"><path d="M.5 5h3L7 1.500v11L3.500 9h-3zM9.500 5q1.500 2 0 4M11.500 3.500q3 3.500 0 7M13.500 1.500q4.500 5.500 0 11" /></svg>
          <svg width="23" height="13" fill="none" stroke="#fff"><path d="M.5.5h22v12H.5z" /><path d="M3 4h17M3 6.500h17" strokeDasharray="2 1" /><path d="M6 9.500h11" /></svg>
          <svg width="14" height="14" fill="none" stroke="#fff"><path d="M1.500 4.500h11v5h-11zM7 0v14" strokeWidth="1.200" /></svg>
          <Icon name="sogou" />
          <Clock>19:13<br />2018/5/24</Clock>
          <Notice aria-label="通知">
            <svg width="25" height="25" viewBox="0 0 25 25">
              <path d="M1 2h16v12H9l-4 4v-4H1z" fill="#fff" />
              <path d="M4 5.500h10M4 8h10M4 10.500h6" stroke="#000" />
              <circle cx="16" cy="17" r="7.500" fill="#333" stroke="#888" />
              <text x="13" y="21" fill="#fff" fontSize="11" fontWeight="bold">1</text>
            </svg>
          </Notice>
          <ShowDesktop aria-label="显示桌面" />
        </Tray>
      </TaskBar>

      <Ime>
        <ImeLogo><Icon name="sogou" size={28} /></ImeLogo>
        <ImeBody>
          {['zhong', 'punct', 'smile', 'mic', 'keys', 'person', 'shirt', 'wrench'].map(n => (
            <IconButton key={n} aria-label={n}><Icon name={n} /></IconButton>
          ))}
        </ImeBody>
      </Ime>
    </Window>
  );
}
